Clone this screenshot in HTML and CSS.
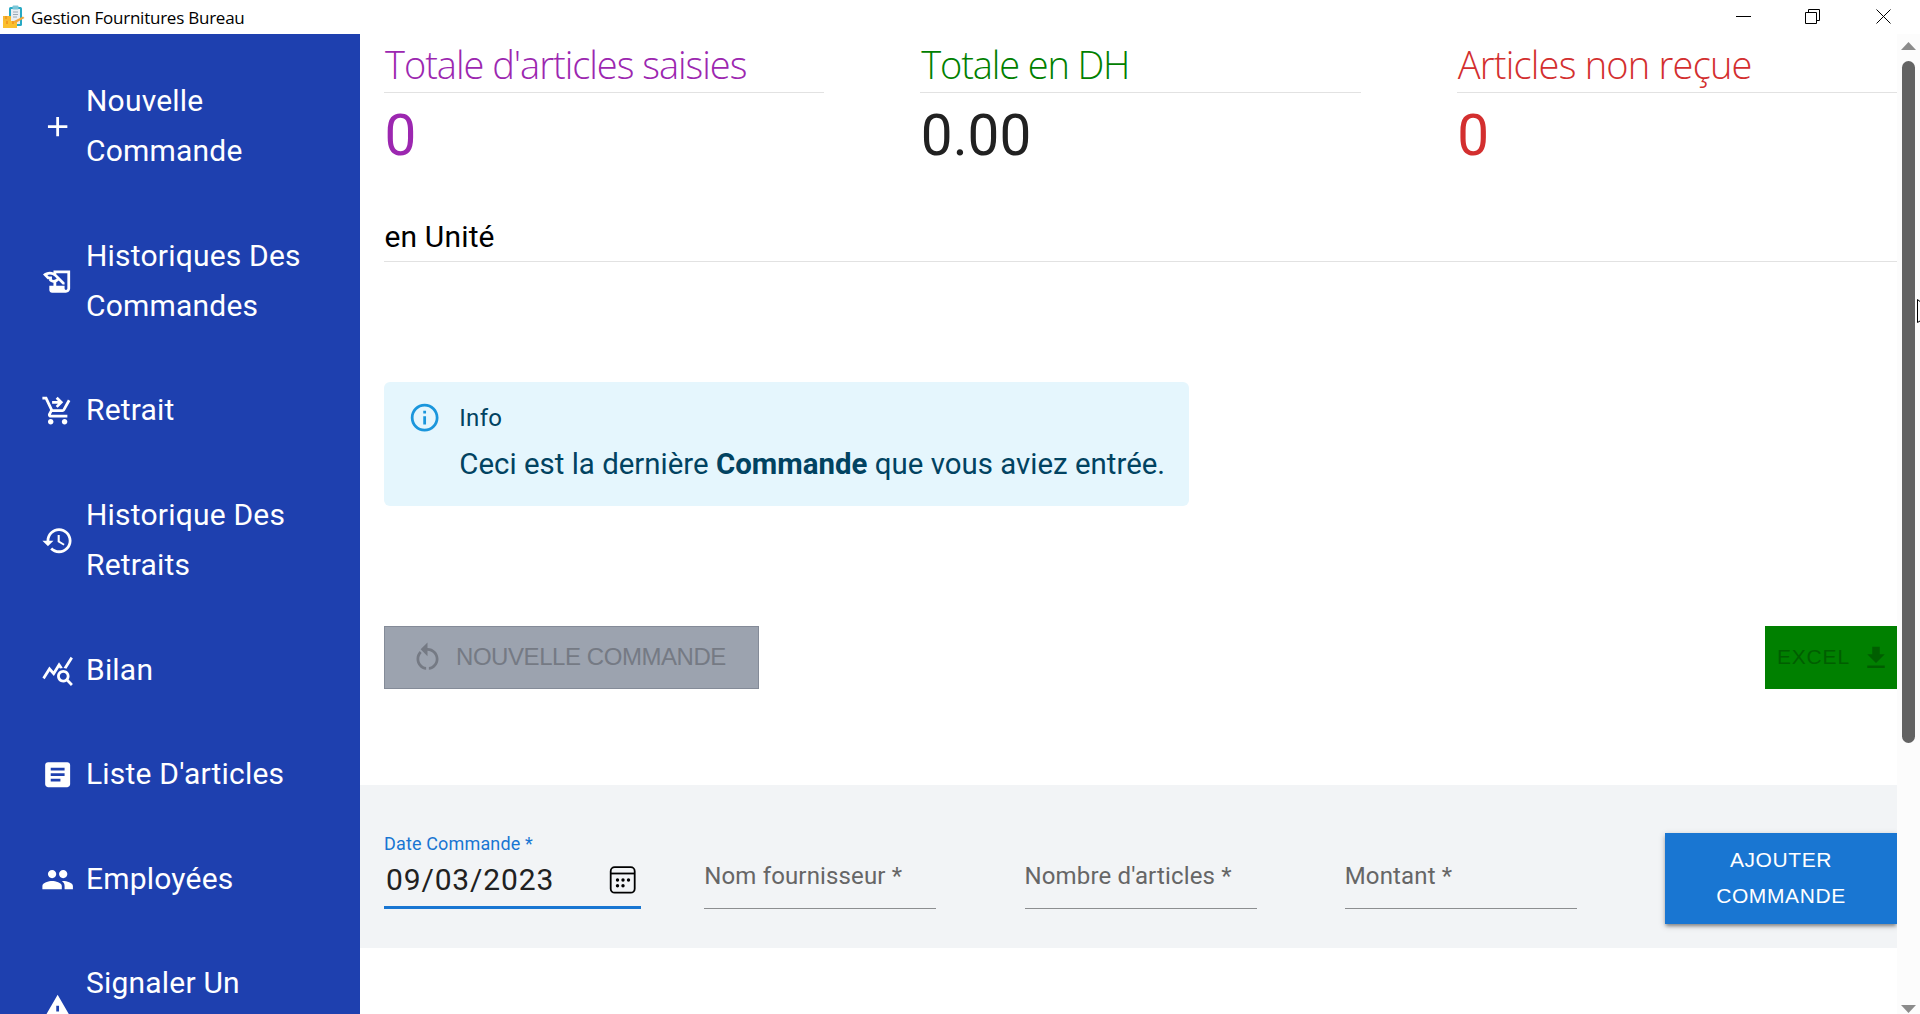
FILE: index.html
```html
<!DOCTYPE html>
<html lang="fr">
<head>
<meta charset="utf-8">
<title>Gestion Fournitures Bureau</title>
<link rel="stylesheet" href="styles.css">
</head>
<body>
<header class="titlebar">
  <svg class="app-icon" viewBox="0 0 22 24"><rect x="6" y="2" width="13" height="19" rx="1.500" fill="#27a9c4"/><rect x="8" y="4" width="9" height="15" fill="#e9edf2"/><rect x="9.500" y="0.500" width="6" height="4" rx="1" fill="#7cc7d8"/><path d="M10 7h5M10 9.500h5M10 12h4" stroke="#9aa7b5"/><rect x="0" y="11" width="8" height="6" fill="#f6b932"/><rect x="0" y="16" width="14" height="7" fill="#fbc02d"/><path d="M2 11h2v3H2zM3 16h2v3H3zM9 16h2v3H9z" fill="#f39c1f"/><path d="M10 16.500l10-5 1.500 1.500-9 5z" fill="#f2a73b"/></svg>
  <span class="app-title">Gestion Fournitures Bureau</span>
  <div class="window-controls">
    <svg viewBox="0 0 16 16"><path d="M0 7.500h15"/></svg>
    <svg class="restore" viewBox="0 0 16 16"><path d="M.5 3.500h11v11H.5zM3.500 3V.5h11v11H12"/></svg>
    <svg viewBox="0 0 16 16"><path d="M.5 .5l14 14M14.500 .5l-14 14"/></svg>
  </div>
</header>
<div class="app">
  <nav class="sidebar">
    <a class="nav-item"><svg viewBox="0 0 24 24"><path d="M19 13h-6v6h-2v-6H5v-2h6V5h2v6h6v2z"/></svg><span>Nouvelle<br>Commande</span></a>
    <a class="nav-item"><svg viewBox="0 0 24 24"><path d="M9 4v1.380c-.83-.33-1.720-.5-2.610-.5-1.790 0-3.580.68-4.950 2.050l3.330 3.330h1.110v1.110c.86.86 1.980 1.310 3.110 1.360V15H6v3c0 1.100.9 2 2 2h10c1.660 0 3-1.340 3-3V4H9zm-1.110 6.410V8.260H5.610L4.570 7.220a5.070 5.070 0 0 1 1.820-.34c1.340 0 2.590.52 3.540 1.460l1.410 1.410-.2.200c-.51.51-1.190.8-1.920.8-.47 0-.93-.12-1.330-.34zM19 17c0 .55-.45 1-1 1s-1-.45-1-1v-2h-6v-2.590c.57-.23 1.100-.57 1.560-1.030l.2-.2L15.590 14H17v-1.410l-6-5.970V6h8v11z"/></svg><span>Historiques Des<br>Commandes</span></a>
    <a class="nav-item"><svg viewBox="0 0 24 24"><path d="M7 18c-1.100 0-1.990.9-1.990 2S5.900 22 7 22s2-.9 2-2-.9-2-2-2zm10 0c-1.100 0-1.990.9-1.990 2s.89 2 1.990 2 2-.9 2-2-.9-2-2-2zm-9.830-3.250l.03-.12.900-1.630h7.450c.75 0 1.410-.41 1.750-1.030l3.860-7.010L19.420 4l-1.100 2-2.760 5H8.530l-4.260-9H1v2h2l3.600 7.590-1.350 2.450C4.520 15.370 5.480 17 7 17h12v-2H7.420c-.13 0-.25-.11-.25-.25zM12 10l4-4-4-4-1.400 1.400L12.200 5H8v2h4.200l-1.600 1.600z"/></svg><span>Retrait</span></a>
    <a class="nav-item"><svg viewBox="0 0 24 24"><path d="M13 3c-4.970 0-9 4.030-9 9H1l3.890 3.890.07.14L9 12H6c0-3.870 3.130-7 7-7s7 3.130 7 7-3.130 7-7 7c-1.930 0-3.680-.79-4.940-2.060l-1.420 1.420C8.270 19.990 10.510 21 13 21c4.970 0 9-4.030 9-9s-4.030-9-9-9zm-1 5v5l4.280 2.540.72-1.210-3.500-2.080V8H12z"/></svg><span>Historique Des<br>Retraits</span></a>
    <a class="nav-item"><svg viewBox="0 0 24 24"><path d="M19.880 18.470c.44-.7.700-1.510.7-2.390 0-2.490-2.010-4.500-4.500-4.500s-4.500 2.010-4.500 4.500 2.010 4.500 4.490 4.500c.88 0 1.700-.26 2.390-.7L21.580 23 23 21.580l-3.120-3.110zm-3.800.11c-1.380 0-2.500-1.120-2.500-2.500s1.120-2.500 2.500-2.500 2.500 1.120 2.500 2.500-1.120 2.500-2.500 2.500zm-.36-8.500c-.74.020-1.450.18-2.100.45l-.55-.83-3.800 6.180-3.010-3.520-3.630 5.810L1 17l5-8 3 3.500L13 6c0 0 2.720 4.080 2.720 4.080zm2.590.5c-.64-.28-1.330-.45-2.050-.49L21.380 2 23 3.180l-4.690 7.400z"/></svg><span>Bilan</span></a>
    <a class="nav-item"><svg viewBox="0 0 24 24"><path d="M19 3H5c-1.100 0-2 .9-2 2v14c0 1.100.9 2 2 2h14c1.100 0 2-.9 2-2V5c0-1.100-.9-2-2-2zm-5 14H7v-2h7v2zm3-4H7v-2h10v2zm0-4H7V7h10v2z"/></svg><span>Liste D'articles</span></a>
    <a class="nav-item"><svg viewBox="0 0 24 24"><path d="M16 11c1.660 0 2.990-1.340 2.990-3S17.660 5 16 5s-3 1.340-3 3 1.340 3 3 3zm-8 0c1.660 0 2.990-1.340 2.990-3S9.660 5 8 5 5 6.340 5 8s1.340 3 3 3zm0 2c-2.330 0-7 1.170-7 3.500V19h14v-2.500c0-2.330-4.670-3.500-7-3.500zm8 0c-.29 0-.62.020-.97.050 1.160.84 1.970 1.970 1.970 3.450V19h6v-2.500c0-2.330-4.670-3.500-7-3.500z"/></svg><span>Employées</span></a>
    <a class="nav-item"><svg viewBox="0 0 24 24"><path d="M1 21h22L12 2 1 21zm12-3h-2v-2h2v2zm0-4h-2v-4h2v4z"/></svg><span>Signaler Un<br>&nbsp;</span></a>
  </nav>
  <main class="content">
    <section class="stats">
      <div class="stat stat-items"><h2>Totale d'articles saisies</h2><p>0</p></div>
      <div class="stat stat-total"><h2>Totale en DH</h2><p>0.00</p></div>
      <div class="stat stat-missing"><h2>Articles non reçue</h2><p>0</p></div>
    </section>
    <div class="unit">en Unité</div>
    <div class="alert">
      <svg viewBox="0 0 24 24"><path d="M11 7h2v2h-2V7zm0 4h2v6h-2v-6zm1-9C6.480 2 2 6.480 2 12s4.480 10 10 10 10-4.480 10-10S17.520 2 12 2zm0 18c-4.410 0-8-3.590-8-8s3.590-8 8-8 8 3.590 8 8-3.590 8-8 8z"/></svg>
      <div><div class="alert-title">Info</div><div class="alert-text">Ceci est la dernière <strong>Commande</strong> que vous aviez entrée.</div></div>
    </div>
    <div class="actions">
      <button class="btn-new" disabled><svg viewBox="0 0 24 24"><path d="M12 5V1L7 6l5 5V7c3.310 0 6 2.690 6 6 0 2.970-2.170 5.430-5 5.910v2.020c3.950-.49 7-3.850 7-7.930 0-4.420-3.580-8-8-8zm-6 8c0-1.650.67-3.150 1.760-4.240L6.340 7.340C4.900 8.790 4 10.790 4 13c0 4.080 3.050 7.440 7 7.930v-2.020c-2.830-.48-5-2.940-5-5.910z"/></svg><span>NOUVELLE COMMANDE</span></button>
      <button class="btn-excel" disabled><span>EXCEL</span><svg viewBox="0 0 24 24"><path d="M19 9h-4V3H9v6H5l7 7 7-7zM5 18v2h14v-2H5z"/></svg></button>
    </div>
    <form class="order-form">
      <div class="field field-date"><label>Date Commande *</label><div class="date-value"><span>09/03/2023</span><svg viewBox="0 0 28 28"><rect x="1.700" y="1.200" width="24" height="25.500" rx="4"/><path d="M2 7.500h24"/><g class="dots"><circle cx="8.500" cy="14" r="1.700"/><circle cx="14" cy="14" r="1.700"/><circle cx="19.500" cy="14" r="1.700"/><circle cx="8.500" cy="19.800" r="1.700"/><circle cx="14" cy="19.800" r="1.700"/></g></svg></div></div>
      <div class="field"><label>Nom fournisseur *</label></div>
      <div class="field"><label>Nombre d'articles *</label></div>
      <div class="field"><label>Montant *</label></div>
      <button class="btn-add" type="button">AJOUTER<br>COMMANDE</button>
    </form>
  </main>
  <aside class="scrollbar"><svg viewBox="0 0 15 8"><path d="M0 8L7.500 0 15 8z"/></svg><div class="track"><div class="thumb"></div></div><svg viewBox="0 0 15 8"><path d="M0 0l7.500 8L15 0z"/></svg></aside>
</div>
<svg class="cursor" viewBox="0 0 3 24"><path d="M3 2.500L.5 .5v23L3 22"/></svg>
</body>
</html>
```
FILE: styles.css
```css
* { box-sizing: border-box; margin: 0; padding: 0; }
body { width: 1920px; height: 1014px; overflow: hidden; display: flex; flex-direction: column; background: #fff; color: #000; font-family: Roboto, sans-serif; }
button { border: 0; font-family: "Liberation Sans", Arial, sans-serif; }

.titlebar { flex: none; height: 34px; display: flex; align-items: center; padding-left: 3px; }
.app-icon { width: 22px; height: 24px; margin-right: 6px; }
.app-title { font-family: "Open Sans", sans-serif; font-size: 17px; letter-spacing: -.24px; }
.window-controls { margin-left: auto; margin-right: 28px; display: flex; gap: 54px; }
.window-controls svg { width: 16px; height: 16px; fill: none; stroke: #000; stroke-width: 1; }
.window-controls .restore { margin: 0 1px 0 -1px; }

.app { flex: 1; min-height: 0; display: flex; }
.sidebar { width: 360px; flex: none; background: #1e40af; padding-top: 42.300px; display: flex; flex-direction: column; gap: 54.600px; overflow: hidden; }
.nav-item { flex: none; display: flex; align-items: center; padding-left: 41px; color: #fff; font-size: 30px; line-height: 50px; letter-spacing: .2px; }
.nav-item svg { width: 33.300px; height: 33.300px; margin: 1px 11.700px 0 0; fill: #fff; }

.content { flex: 1; min-width: 0; overflow: hidden; }
.stats { margin-left: 24px; display: grid; grid-template-columns: repeat(3, 1fr); column-gap: 96px; }
.stat h2 { height: 59px; padding: 5px 0 0 1px; border-bottom: 1px solid #e2e2e2; font: 300 38px/50px "Open Sans", sans-serif; white-space: nowrap; }
.stat p { height: 77px; font-size: 56.670px; line-height: 70px; padding: 8px 0 0 .5px; }
.stat-items { color: #9c27b0; }
.stat-items h2 { letter-spacing: -1.020px; }
.stat-total h2 { color: #008000; letter-spacing: -1.150px; }
.stat-total p { color: #212121; }
.stat-missing { color: #d32f2f; }
.stat-missing h2 { letter-spacing: -.78px; }
.unit { margin: 47px 0 0 24px; height: 45px; padding-left: .5px; font-size: 30px; line-height: 40px; letter-spacing: .15px; border-bottom: 1px solid #e2e2e2; }

.alert { margin: 120px 0 0 24px; width: 805px; height: 124px; border-radius: 6px; background: #e5f6fd; color: #014361; display: flex; padding: 19px 24px; }
.alert svg { flex: none; width: 33.300px; height: 33.300px; fill: #1a96dc; margin-right: 18px; }
.alert-title { font-size: 24px; line-height: 34px; letter-spacing: .3px; }
.alert-text { font-size: 29.400px; line-height: 46px; margin-top: 6px; letter-spacing: .02px; white-space: nowrap; }

.actions { margin: 120px 0 0 24px; display: flex; justify-content: space-between; }
.actions button { height: 63px; display: flex; align-items: center; }
.actions span { padding-bottom: 2px; }
.btn-new { width: 375px; padding-left: 26px; background: #9ca3af; border: 1px solid #848b98; color: #757a84; font-size: 24px; letter-spacing: -.44px; }
.btn-new svg { width: 33px; height: 33px; margin-right: 12px; fill: #757a84; }
.btn-excel { width: 132px; padding-left: 12px; background: #008000; color: #005e00; font-size: 21px; letter-spacing: .8px; }
.btn-excel svg { width: 30px; height: 30px; margin-left: 11px; fill: #005e00; }

.order-form { height: 163px; margin-top: 96px; padding: 48px 0 0 24px; background: #f2f4f6; display: grid; grid-template-columns: repeat(5, 232px); column-gap: 88.250px; }
.field { height: 76px; padding-top: 28px; border-bottom: 1px solid #8c8e90; color: #666; font-size: 24px; line-height: 30px; letter-spacing: .15px; }
.field-date { width: 257px; padding-top: 0; border-bottom: 3px solid #1976d2; }
.field-date label { display: block; color: #1976d2; font-size: 18px; line-height: 22px; }
.date-value { display: flex; justify-content: space-between; align-items: center; color: #212121; font-size: 30px; line-height: 50px; letter-spacing: .85px; padding: 0 4px 0 2px; }
.date-value svg { width: 28px; height: 28px; fill: none; stroke: #000; stroke-width: 1.800; }
.date-value .dots { fill: #000; stroke: none; }
.btn-add { height: 91px; padding-bottom: 2px; background: #1976d2; color: #fff; font-size: 21px; line-height: 36px; letter-spacing: .6px; box-shadow: 0 3px 3px -1px rgba(0,0,0,.3), 0 2px 6px rgba(0,0,0,.25); }

.scrollbar { width: 23px; flex: none; background: #fcfcfc; display: flex; flex-direction: column; align-items: center; padding: 8px 0 1px; }
.scrollbar svg { width: 15px; height: 8px; fill: #8b8b8b; }
.track { flex: 1; padding-top: 11px; }
.thumb { width: 13px; height: 682px; border-radius: 7px; background: #636363; }
.cursor { position: absolute; left: 1917px; top: 299px; width: 3px; height: 24px; fill: none; stroke: #000; }
```
